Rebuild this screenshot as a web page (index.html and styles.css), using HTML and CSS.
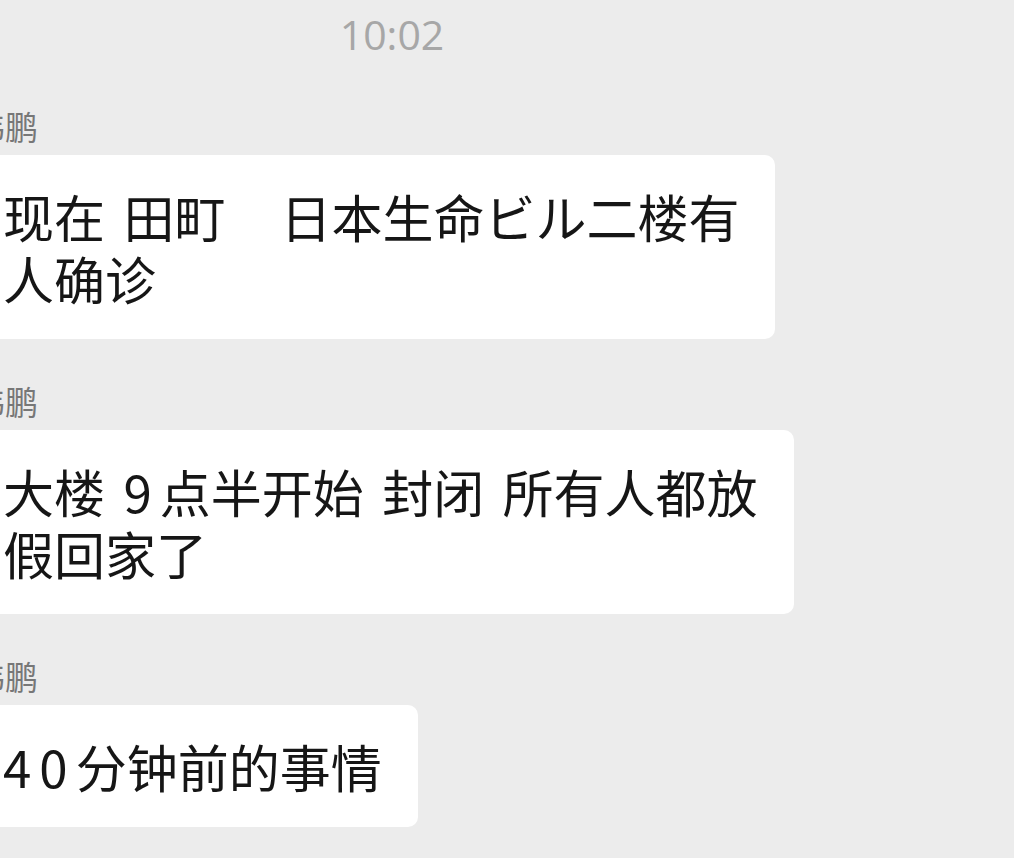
FILE: index.html
```html
<!DOCTYPE html>
<html lang="zh-CN">
<head>
  <meta charset="UTF-8" />
  <meta name="viewport" content="width=device-width, initial-scale=1.0" />
  <title>聊天记录</title>
  <link rel="stylesheet" href="styles.css">
</head>
<body>
  <div class="chat">
    <div class="time">10:02</div>

    <div class="msg">
      <div class="name">伟鹏</div>
      <div class="bubble">现在 田町<span class="gap">　</span>日本生命ビル二楼有<br>人确诊</div>
    </div>

    <div class="msg">
      <div class="name">伟鹏</div>
      <div class="bubble">大楼 <span class="num">9</span>点半开始 封闭 所有人都放<br>假回家了</div>
    </div>

    <div class="msg">
      <div class="name">伟鹏</div>
      <div class="bubble"><span class="num">40</span>分钟前的事情</div>
    </div>
  </div>
</body>
</html>
```

FILE: styles.css
```css
body {
  margin: 0;
  background: #ececec;
  font-family: 'Noto Sans CJK SC', 'Noto Sans CJK JP', sans-serif;
  overflow: hidden;
  height: 858px;
}
.chat {
  display: flex;
  flex-direction: column;
  align-items: flex-start;
  margin-left: -34px;
}
.time {
  text-align: center;
  padding-left: 34px;
  box-sizing: border-box;
  width: 818px;
  height: 68px;
  line-height: 68px;
  font-family: 'Open Sans', 'Liberation Sans', sans-serif;
  font-weight: 400;
  font-size: 41px;
  color: #a7a7a7;
  margin-bottom: 38px;
}
.msg {
  display: flex;
  flex-direction: column;
  align-items: flex-start;
  margin-bottom: 42px;
}
.name {
  height: 40px;
  line-height: 40px;
  font-size: 33px;
  color: #777;
  padding-left: 6px;
  margin-bottom: 9px;
}
.bubble {
  background: #fff;
  border-radius: 10px;
  padding: 30px 36px 30px 37px;
  font-size: 51px;
  line-height: 62px;
  color: #161616;
  white-space: nowrap;
  word-spacing: 7px;
}
.num {
  letter-spacing: 8px;
}
.gap {
  margin-right: 4px;
}
```
